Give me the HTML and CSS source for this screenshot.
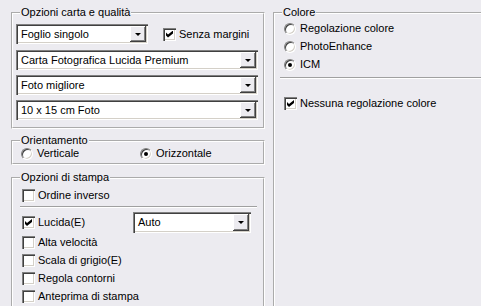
FILE: index.html
```html
<!DOCTYPE html>
<html lang="it">
<head>
<meta charset="UTF-8">
<title>Opzioni di stampa</title>
<link rel="stylesheet" href="styles.css">
</head>
<body>
<div class="page">

  <div class="col-left">
    <fieldset class="group paper">
      <legend>Opzioni carta e qualità</legend>
      <div class="row first">
        <div class="combo narrow"><span class="val">Foglio singolo</span><span class="btn"></span></div>
        <label class="opt margin"><span class="cb on"></span>Senza margini</label>
      </div>
      <div class="combo"><span class="val">Carta Fotografica Lucida Premium</span><span class="btn"></span></div>
      <div class="combo"><span class="val">Foto migliore</span><span class="btn"></span></div>
      <div class="combo"><span class="val">10 x 15 cm Foto</span><span class="btn"></span></div>
    </fieldset>

    <fieldset class="group orient">
      <legend>Orientamento</legend>
      <div class="radios">
        <label class="opt ritem"><span class="rb"></span>Verticale</label>
        <label class="opt ritem"><span class="rb on"></span>Orizzontale</label>
      </div>
    </fieldset>

    <fieldset class="group print">
      <legend>Opzioni di stampa</legend>
      <label class="opt"><span class="cb"></span>Ordine inverso</label>
      <div class="sep"></div>
      <div class="row lucida">
        <label class="opt lbl"><span class="cb on"></span>Lucida(E)</label>
        <div class="combo small"><span class="val">Auto</span><span class="btn"></span></div>
      </div>
      <label class="opt"><span class="cb"></span>Alta velocità</label>
      <label class="opt"><span class="cb"></span>Scala di grigio(E)</label>
      <label class="opt"><span class="cb"></span>Regola contorni</label>
      <label class="opt"><span class="cb"></span>Anteprima di stampa</label>
    </fieldset>
  </div>

  <div class="col-right">
    <fieldset class="group color">
      <legend>Colore</legend>
      <label class="opt"><span class="rb"></span>Regolazione colore</label>
      <label class="opt"><span class="rb"></span>PhotoEnhance</label>
      <label class="opt"><span class="rb on"></span>ICM</label>
      <div class="sep"></div>
      <label class="opt nocolor"><span class="cb on"></span>Nessuna regolazione colore</label>
    </fieldset>
  </div>

</div>
</body>
</html>
```

FILE: styles.css
```css
html,body{
  margin:0;
  padding:0;
  background:#ecebf0;
  color:#000;
  font-family:"Liberation Sans",Arial,sans-serif;
  font-size:11px;
}
body{
  width:481px;
  height:306px;
  overflow:hidden;
}

.page{
  display:flex;
  align-items:flex-start;
  padding:6px 0 0 11px;
}

/* ----------  GROUP BOXES  ---------- */
.group{
  margin:0;
  border:2px groove #fff;
  padding:0 5px 0 3px;
  min-width:0;
}
.group legend{
  margin-left:4px;
  padding:0 1px;
  line-height:13px;
  height:13px;
}

.col-left{
  flex:none;
  width:254px;
  margin-right:8px;
}
.col-right{
  flex:1;
  margin-right:-12px;   /* group box runs past the window edge */
}

.paper{ padding-top:5px; padding-bottom:7px; }
.orient{ margin-top:5px; padding-top:0; padding-bottom:3px; }
.print{ margin-top:6px; padding-top:5px; padding-bottom:4px; }
.color{ padding-top:3px; height:310px; box-sizing:border-box; }

/* ----------  COMBO BOXES  ---------- */
.combo{
  display:flex;
  height:20px;
  box-sizing:border-box;
  padding:2px;
  background:#fff;
  box-shadow:inset 1px 1px #808080, inset 2px 2px #404040,
             inset -1px -1px #fff, inset -2px -2px #d4d0c8;
}
.combo .val{
  flex:1;
  padding-left:3px;
  line-height:16px;
  white-space:nowrap;
  overflow:hidden;
}
.combo .btn{
  position:relative;
  width:16px;
  background:#ecebf0;
  box-shadow:inset -1px -1px #404040, inset 1px 1px #fff,
             inset -2px -2px #808080;
}
.combo .btn::after{
  content:"";
  position:absolute;
  left:5px;
  top:7px;
  border-left:3px solid transparent;
  border-right:3px solid transparent;
  border-top:3px solid #000;
}
.combo.narrow{ width:132px; }
.combo.small{ width:118px; height:21px; }
.paper > .combo{ margin-top:5px; }
.paper > .row + .combo{ margin-top:6px; }

/* ----------  CHECK / RADIO  ---------- */
.row{ display:flex; align-items:center; }

.opt{
  display:flex;
  align-items:center;
  height:13px;
  line-height:13px;
  padding-left:6px;
  white-space:nowrap;
}
.opt.margin{ padding-left:15px; }

.cb{
  position:relative;
  flex:none;
  width:13px;
  height:13px;
  margin-right:3px;
  background:#fff;
  box-shadow:inset 1px 1px #808080, inset 2px 2px #404040,
             inset -1px -1px #fff, inset -2px -2px #d4d0c8;
}
.cb.on::after{
  content:"";
  position:absolute;
  left:3px;
  top:3px;
  width:7px;
  height:7px;
  background:#000;
  clip-path:polygon(0 28.6%,28.6% 57.1%,100% 0,100% 42.9%,28.6% 100%,0 71.4%);
}

.rb{
  position:relative;
  flex:none;
  width:12px;
  height:12px;
  box-sizing:border-box;
  margin-right:4px;
  border-radius:50%;
  border:1px solid;
  border-color:#808080 #fff #fff #808080;
  background:#fff;
  box-shadow:inset 1px 1px #404040, inset -1px -1px #d4d0c8;
}
.rb.on::after{
  content:"";
  position:absolute;
  left:3px;
  top:3px;
  width:4px;
  height:4px;
  border-radius:50%;
  background:#000;
}

.radios{ display:flex; }
.ritem{ width:114px; padding-left:5px; }

.sep{
  border-top:1px solid #a0a0a0;
  border-bottom:1px solid #fff;
}

/* print options */
.print .sep{ margin:4px 1px 4px 4px; }
.print .lucida{ height:21px; margin-bottom:3px; }
.print .lbl{ width:111px; }
.print .lucida + .opt ~ .opt{ margin-top:5px; }

/* colour */
.color .opt + .opt{ margin-top:5px; }
.color .sep{ margin:6px 0 18px 2px; }
.color .nocolor{ margin-top:0; }
```
